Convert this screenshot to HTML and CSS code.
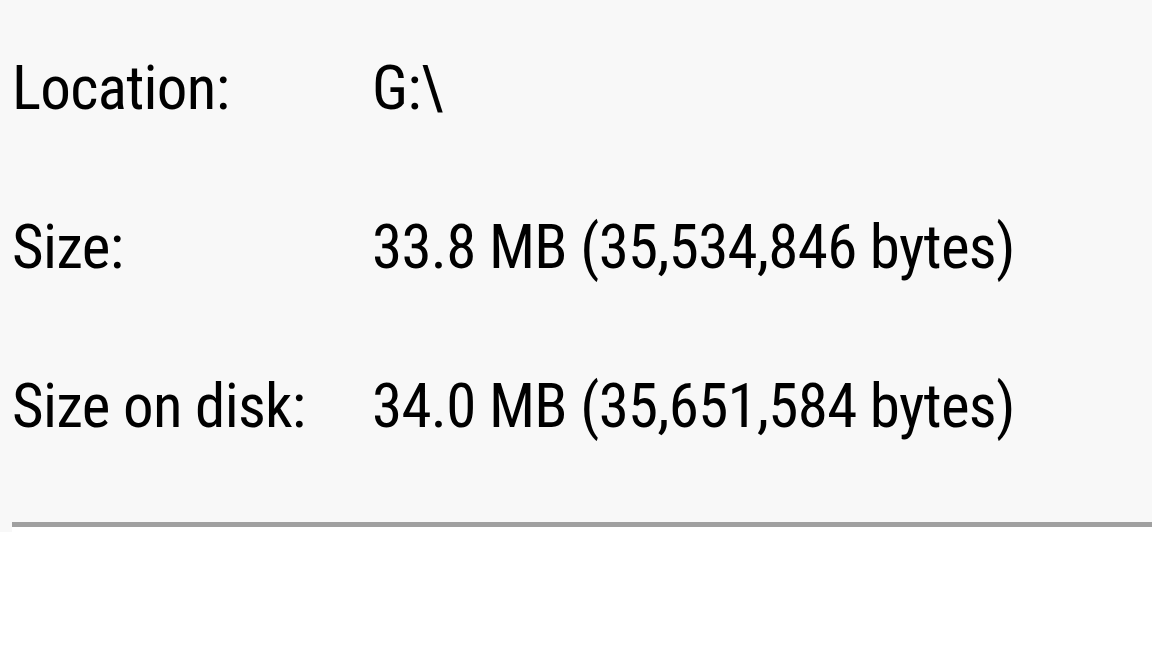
FILE: index.html
```html
<!DOCTYPE html>
<html>
<head>
<meta charset="utf-8">
<link rel="stylesheet" href="styles.css">
</head>
<body>
<div class="panel">
  <div class="row"><span class="label">Location:</span><span class="value">G:\</span></div>
  <div class="row"><span class="label">Size:</span><span class="value">33.8 MB (35,534,846 bytes)</span></div>
  <div class="row"><span class="label">Size on disk:</span><span class="value">34.0 MB (35,651,584 bytes)</span></div>
</div>
<div class="footer">
  <div class="edge"></div>
  <div class="separator"></div>
</div>
</body>
</html>
```
FILE: styles.css
```css
html, body {
  margin: 0;
  padding: 0;
  background: #ffffff;
}
body {
  width: 1152px;
  height: 648px;
  overflow: hidden;
  font-family: "Roboto Condensed", "DejaVu Sans Condensed", sans-serif;
  color: #000000;
}
.panel {
  background: #f8f8f8;
  height: 522px;
  padding: 52px 0 0 12px;
  box-sizing: border-box;
  display: flex;
  flex-direction: column;
}
.row {
  display: flex;
  flex: none;
  height: 159px;
  font-size: 61px;
  line-height: 72px;
  letter-spacing: -0.7px;
}
.label {
  width: 360px;
  flex: none;
}
.value {
  white-space: nowrap;
}
.footer {
  display: flex;
  align-items: flex-start;
}
.edge {
  width: 12px;
  height: 10px;
  background: #f8f8f8;
  flex: none;
}
.separator {
  flex: 1;
  height: 5px;
  background: #a0a0a0;
}
```
